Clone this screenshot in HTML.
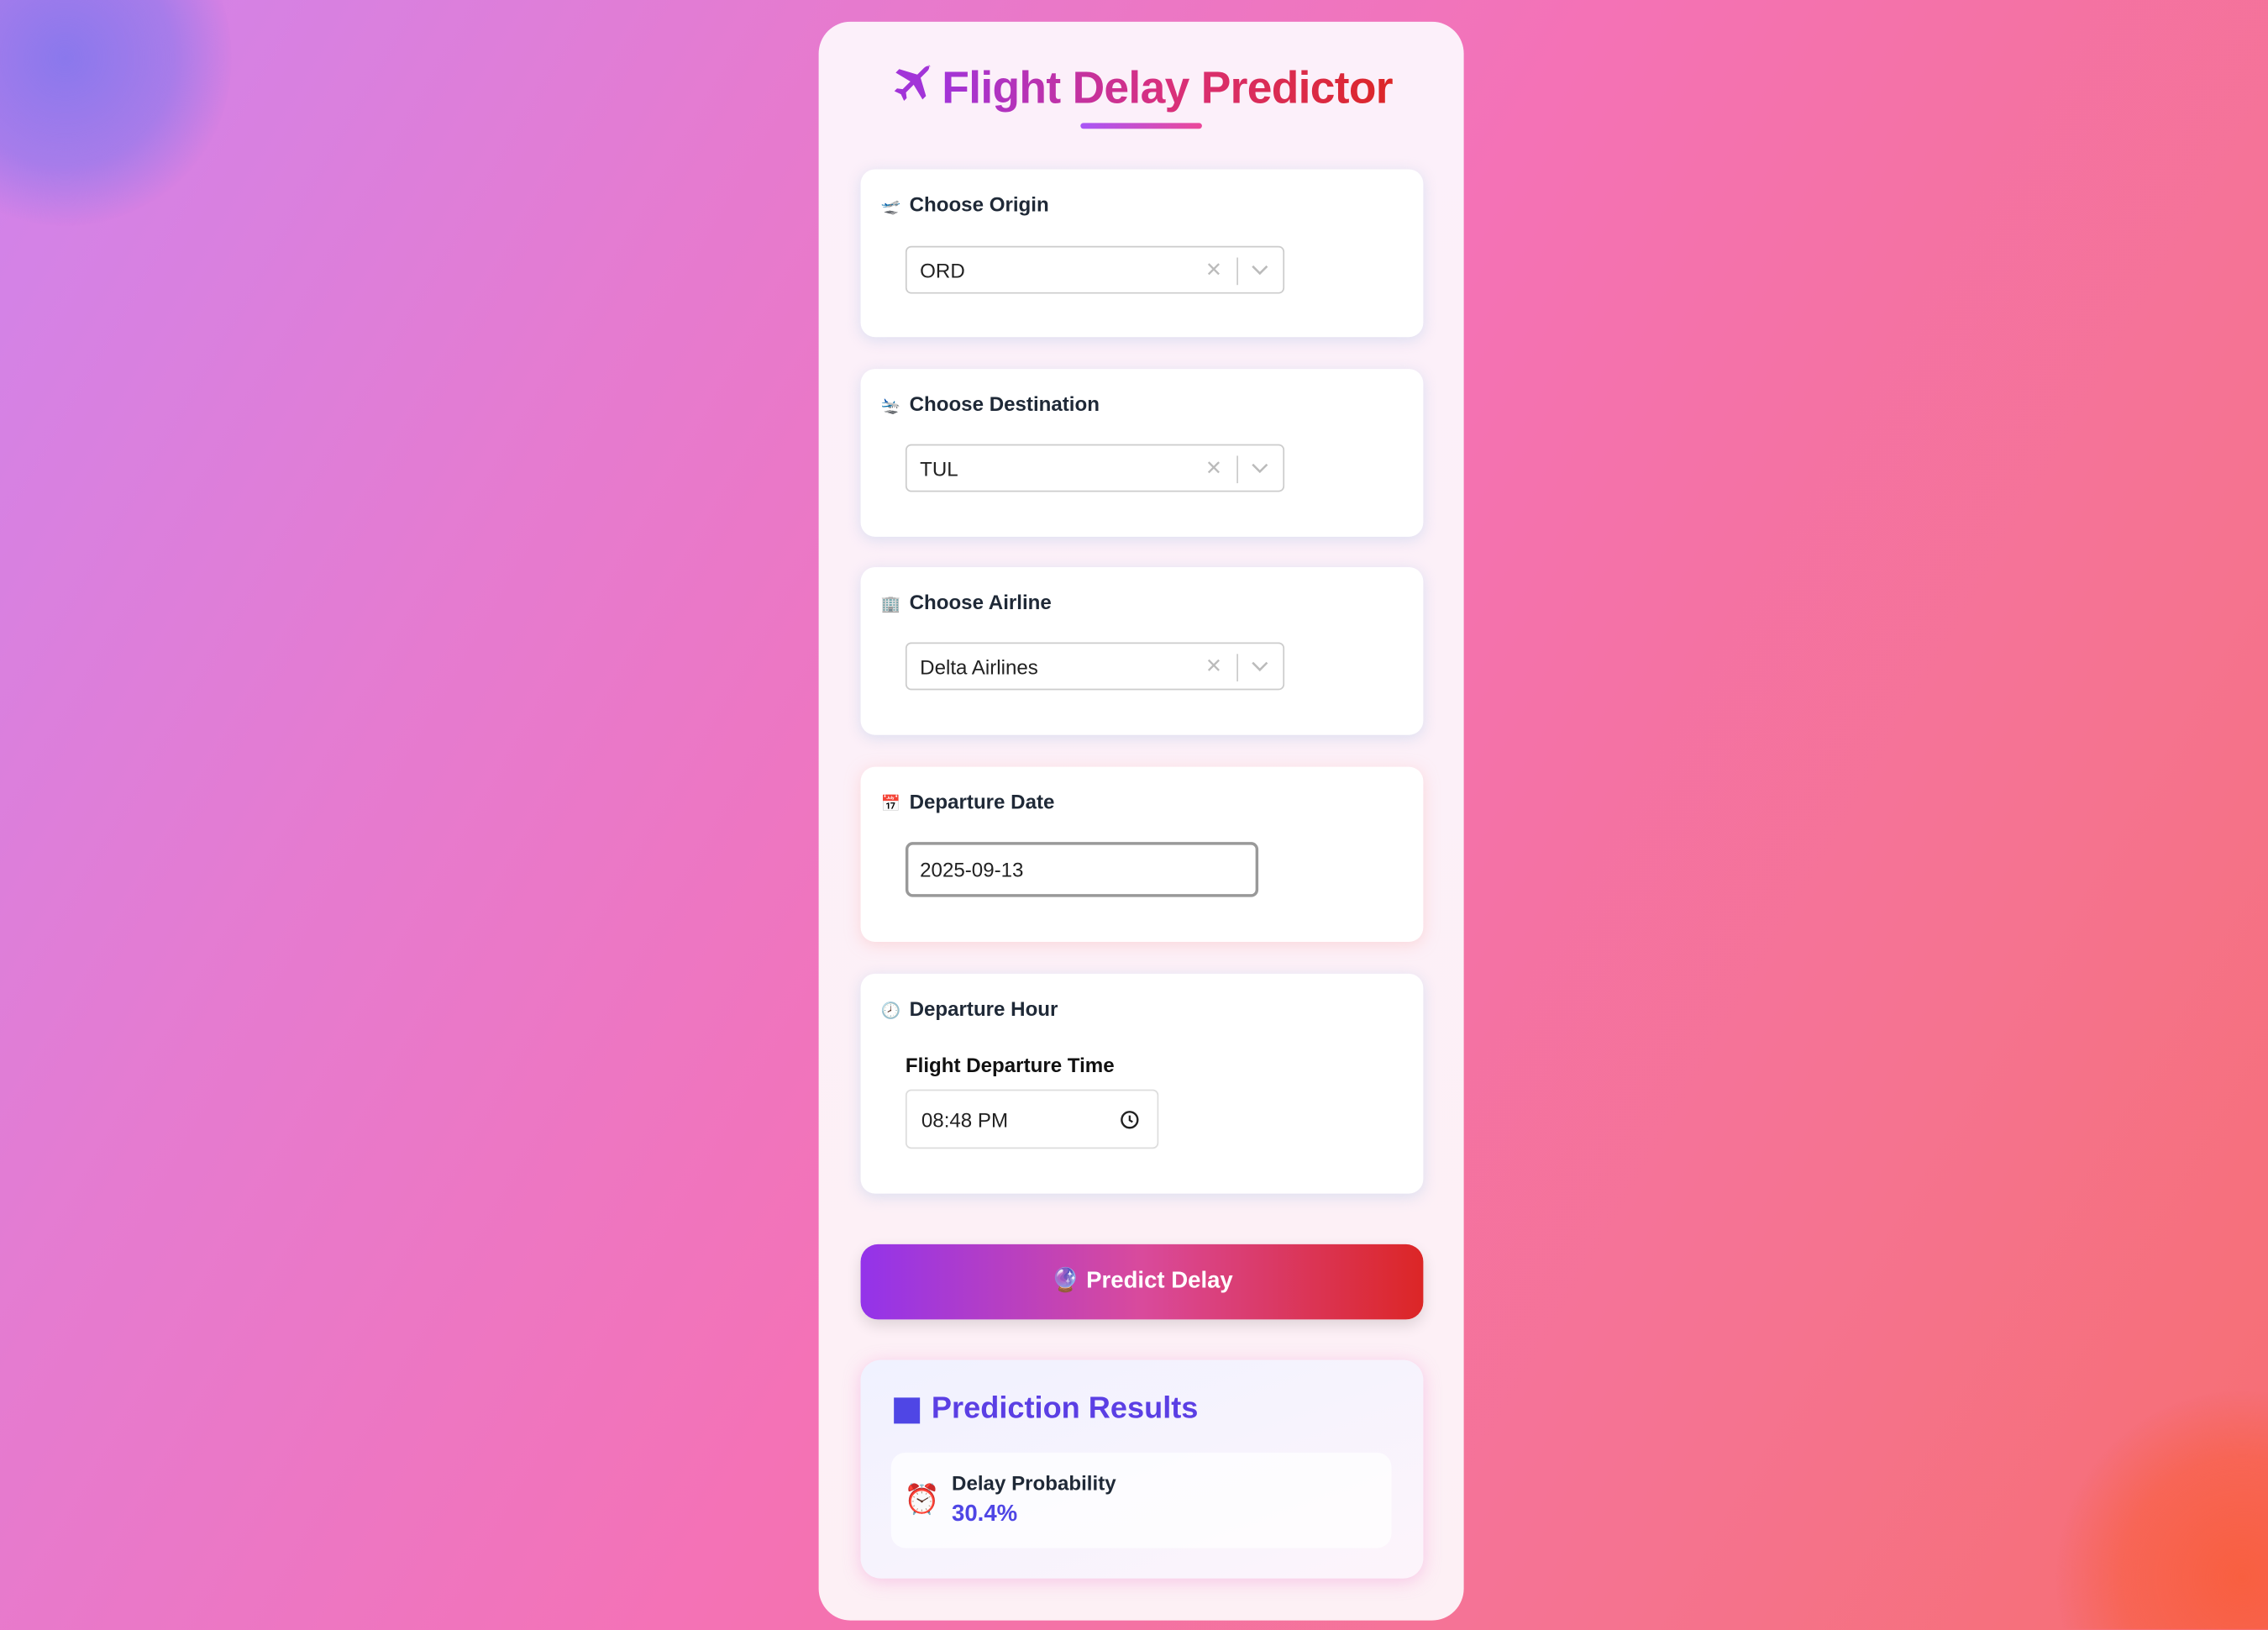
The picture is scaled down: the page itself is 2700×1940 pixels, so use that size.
<!DOCTYPE html>
<html><head><meta charset="utf-8"><style>
*{box-sizing:border-box;margin:0;padding:0}
html,body{width:2700px;height:1940px;overflow:hidden}
body{background:linear-gradient(120deg,#cf84ec 0%,#e57bd0 25%,#f472b6 50%,#f5738f 80%,#f66e70 100%);font-family:"Liberation Sans",sans-serif;position:relative}
#w{position:absolute;left:0;top:0;width:1568px;height:1126px;overflow:hidden;transform:scale(1.72194);transform-origin:0 0}
.blob1{position:absolute;left:-70px;top:-80px;width:230px;height:240px;border-radius:50%;background:radial-gradient(circle,#8a78ec 0%,rgba(138,120,236,.6) 45%,rgba(138,120,236,0) 70%)}
.blob2{position:absolute;left:1420px;top:960px;width:260px;height:260px;border-radius:50%;background:radial-gradient(circle,#f85f40 0%,rgba(248,95,64,.6) 45%,rgba(248,95,64,0) 70%)}
.box{position:absolute;left:566px;top:15px;width:446px;height:1105px;border-radius:22px;background:linear-gradient(180deg,#fcf0fa,#fdf0f5)}
h1{position:absolute;left:0;width:446px;top:28px;text-align:center;font-size:31px;font-weight:bold;letter-spacing:-0.4px;white-space:nowrap}
h1 span{background:linear-gradient(90deg,#a234d8,#d9307c,#dc2626);-webkit-background-clip:text;color:transparent}
h1 svg{vertical-align:-4px;margin-right:4px}
.ul{position:absolute;left:181px;top:70px;width:84px;height:4px;border-radius:2px;background:linear-gradient(90deg,#a855f7,#ec4899)}
.card{position:absolute;left:29px;width:389px;background:#fff;border-radius:10px;box-shadow:0 2px 10px rgba(180,200,230,.45)}
.lab{position:absolute;left:14px;top:16px;font-size:14px;font-weight:bold;color:#1f2937}
.lab i{font-style:normal;font-size:11px;margin-right:6px}
.sel{position:absolute;left:31px;width:262px;height:33px;border:1px solid #ccc;border-radius:4px;font-size:14px;color:#222;padding:8px 9px}
.sel .x{position:absolute;right:42px;top:7px;color:#bbb;font-size:14px}
.sel .d{position:absolute;right:31px;top:7px;width:1px;height:19px;background:#ccc}
.sel svg{position:absolute;right:10px;top:12px}
.btn{position:absolute;left:29px;top:845px;width:389px;height:52px;border-radius:12px;background:linear-gradient(90deg,#9333ea,#d94a9c 50%,#dc2626);color:#fff;font-weight:bold;font-size:16px;text-align:center;line-height:52px;box-shadow:0 4px 10px rgba(0,0,0,.12)}
.res{position:absolute;left:29px;top:925px;width:389px;height:151px;border-radius:14px;background:linear-gradient(160deg,#f0f2ff,#fdf4fb);box-shadow:0 2px 12px rgba(236,120,200,.35)}
</style></head><body><div id="w">
<div class="blob1"></div><div class="blob2"></div>
<div class="box">
<h1><svg width="32" height="32" viewBox="0 0 24 24"><path fill="#a234d8" d="M21.5 2.5c-1-1-2.6-.6-3.6.4L14.4 6.4 5 3.6 3.2 5.4l7.6 4.6-4 4-2.9-.4L2.5 15l3.4 1.6L7.5 20l1.4-1.4-.4-2.9 4-4 4.6 7.6 1.8-1.8-2.8-9.4 3.5-3.5c1-1 1.4-2.6.4-3.6z"/></svg><span>Flight Delay Predictor</span></h1>
<div class="ul"></div>
<div class="card" style="top:102px;height:116px"><div class="lab"><i>🛫</i>Choose Origin</div>
<div class="sel" style="top:53px">ORD<span class="x">✕</span><span class="d"></span><svg width="12" height="8"><path d="M1 1l5 5 5-5" stroke="#bbb" stroke-width="1.5" fill="none"/></svg></div></div>
<div class="card" style="top:240px;height:116px"><div class="lab"><i>🛬</i>Choose Destination</div>
<div class="sel" style="top:52px">TUL<span class="x">✕</span><span class="d"></span><svg width="12" height="8"><path d="M1 1l5 5 5-5" stroke="#bbb" stroke-width="1.5" fill="none"/></svg></div></div>
<div class="card" style="top:377px;height:116px"><div class="lab"><i>🏢</i>Choose Airline</div>
<div class="sel" style="top:52px">Delta Airlines<span class="x">✕</span><span class="d"></span><svg width="12" height="8"><path d="M1 1l5 5 5-5" stroke="#bbb" stroke-width="1.5" fill="none"/></svg></div></div>
<div class="card" style="top:515px;height:121px;box-shadow:0 2px 10px rgba(250,190,190,.5)"><div class="lab"><i>📅</i>Departure Date</div>
<div class="sel" style="top:52px;width:244px;height:38px;border:2px solid #999;border-radius:5px;padding:9px 8px">2025-09-13</div></div>
<div class="card" style="top:658px;height:152px"><div class="lab"><i>🕗</i>Departure Hour</div>
<div style="position:absolute;left:31px;top:55px;font-size:14px;font-weight:bold;color:#111">Flight Departure Time</div>
<div class="sel" style="top:80px;width:175px;height:41px;border-color:#ddd;padding:12px 10px">08:48 PM<svg width="14" height="14" style="top:13px;right:12px"><circle cx="7" cy="7" r="5.5" stroke="#222" stroke-width="1.4" fill="none"/><path d="M7 4v3.3l2 1.2" stroke="#222" stroke-width="1.3" fill="none"/></svg></div></div>
<div class="btn">🔮 Predict Delay</div>
<div class="res">
<div style="position:absolute;left:23px;top:26px;width:18px;height:18px;background:#4f46e5"></div>
<div style="position:absolute;left:49px;top:22px;font-size:21px;font-weight:bold;color:#5b3fe4">Prediction Results</div>
<div style="position:absolute;left:21px;top:64px;width:346px;height:66px;border-radius:10px;background:rgba(255,255,255,.7)">
<div style="position:absolute;left:9px;top:20px;font-size:20px">⏰</div>
<div style="position:absolute;left:42px;top:13px;font-size:14px;font-weight:bold;color:#1f2937">Delay Probability</div>
<div style="position:absolute;left:42px;top:34px;font-size:16px;font-weight:bold;color:#4f46e5">30.4%</div>
</div></div>
</div></div></body></html>
